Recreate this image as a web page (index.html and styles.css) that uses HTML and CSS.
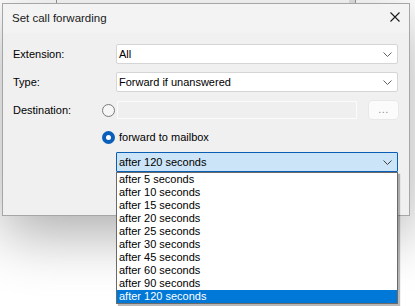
FILE: index.html
```html
<!DOCTYPE html>
<html>
<head>
<meta charset="utf-8">
<link rel="stylesheet" href="styles.css">
</head>
<body>
<div class="desktop">
  <div class="bgwin"><div class="bgwin-strip"></div></div>
  <div class="dialog">
    <div class="titlebar">
      <span class="title">Set call forwarding</span>
      <svg class="close" width="10" height="10" viewBox="0 0 10 10"><path d="M0.5 0.5 L9.5 9.5 M9.5 0.5 L0.5 9.5" stroke="#1b1b1b" stroke-width="1.1" fill="none"/></svg>
    </div>
    <div class="body">
      <div class="row row-ext">
        <span class="lbl lbl-wide">Extension:</span>
        <div class="select"><span class="val">All</span><svg class="chev" width="9" height="5" viewBox="0 0 9 5"><path d="M0.5 0.5 L4.5 4.5 L8.5 0.5" stroke="#606060" stroke-width="1" fill="none"/></svg></div>
      </div>
      <div class="row row-type">
        <span class="lbl lbl-wide">Type:</span>
        <div class="select"><span class="val">Forward if unanswered</span><svg class="chev" width="9" height="5" viewBox="0 0 9 5"><path d="M0.5 0.5 L4.5 4.5 L8.5 0.5" stroke="#606060" stroke-width="1" fill="none"/></svg></div>
      </div>
      <div class="row row-dest">
        <span class="lbl lbl-narrow">Destination:</span>
        <span class="radio"></span>
        <div class="input"></div>
        <div class="more">...</div>
      </div>
      <div class="row row-mail">
        <span class="radio checked"></span>
        <span class="rtext">forward to mailbox</span>
      </div>
      <div class="row row-time">
        <div class="select focus"><span class="val">after 120 seconds</span><svg class="chev" width="9" height="5" viewBox="0 0 9 5"><path d="M0.5 0.5 L4.5 4.5 L8.5 0.5" stroke="#404040" stroke-width="1" fill="none"/></svg>
          <ul class="list">
            <li>after 5 seconds</li>
            <li>after 10 seconds</li>
            <li>after 15 seconds</li>
            <li>after 20 seconds</li>
            <li>after 25 seconds</li>
            <li>after 30 seconds</li>
            <li>after 45 seconds</li>
            <li>after 60 seconds</li>
            <li>after 90 seconds</li>
            <li class="sel">after 120 seconds</li>
          </ul>
        </div>
      </div>
    </div>
  </div>
</div>
</body>
</html>
```

FILE: styles.css
```css
* { box-sizing: border-box; }
html, body {
  margin: 0;
  padding: 0;
  background: #ffffff;
  font-family: "Liberation Sans", Arial, sans-serif;
  font-size: 11px;
  color: #000;
}
.desktop {
  position: relative;
  width: 415px;
  height: 306px;
  overflow: hidden;
}
.bgwin {
  position: absolute;
  left: 56px;
  top: -20px;
  width: 300px;
  height: 40px;
  border: 1px solid #9a9a9a;
  background: #ffffff;
}
.bgwin-strip {
  position: absolute;
  right: 0;
  top: 0;
  width: 6px;
  height: 100%;
  background: #e6e6e6;
}
.dialog {
  position: absolute;
  left: 2px;
  top: 3px;
  width: 408px;
  height: 213px;
  border: 1px solid #a6a6a6;
  background: #f0f0f0;
  box-shadow: 0 18px 55px rgba(0, 0, 0, 0.33);
}
.titlebar {
  height: 29px;
  background: #f3f3f3;
  display: flex;
  align-items: center;
  padding-left: 9px;
  padding-right: 9px;
  justify-content: space-between;
}
.title {
  font-size: 11.5px;
  color: #1a1a1a;
  margin-top: -1px;
}
.close { display: block; margin-top: -4px; }
.body {
  padding: 11px 11px 0 10px;
}
.row {
  display: flex;
  align-items: center;
}
.lbl { flex: none; color: #000; }
.lbl-wide { width: 103px; }
.lbl-narrow { width: 89px; }
.row-type { margin-top: 8px; }
.row-dest { margin-top: 8px; height: 20px; }
.row-mail { margin-top: 8px; height: 18px; padding-left: 89px; }
.row-time { margin-top: 6px; padding-left: 103px; }
.select {
  position: relative;
  flex: 1;
  height: 20px;
  border: 1px solid #d5d5d5;
  border-radius: 2px;
  background: #ffffff;
  display: flex;
  align-items: center;
  justify-content: space-between;
  padding: 0 5px 0 2px;
}
.select .val { color: #000; }
.chev { display: block; margin-top: 0; }
.select.focus {
  background: #cce4f7;
  border-color: #0a5fb4;
  border-radius: 1px;
}
.radio {
  flex: none;
  width: 13px;
  height: 13px;
  border-radius: 50%;
  border: 1px solid #7a7a7a;
  background: #f6f6f6;
}
.radio.checked {
  border: none;
  background: #0a5fb8;
  position: relative;
}
.radio.checked::after {
  content: "";
  position: absolute;
  left: 4px;
  top: 4px;
  width: 5px;
  height: 5px;
  border-radius: 50%;
  background: #fff;
}
.row-dest .radio { margin-right: 2px; }
.input {
  flex: none;
  width: 240px;
  height: 18px;
  border: 1px solid #fbfbfb;
  background: #efefef;
}
.more {
  flex: none;
  margin-left: 11px;
  width: 31px;
  height: 20px;
  border: 1px solid #e8e8e8;
  border-radius: 4px;
  background: #fbfbfb;
  color: #8c8c8c;
  text-align: center;
  line-height: 16px;
  font-size: 11px;
  letter-spacing: 0.5px;
}
.rtext { margin-left: 4px; color: #000; }
.list {
  position: absolute;
  left: -1px;
  top: 19px;
  width: 282px;
  margin: 0;
  padding: 0;
  list-style: none;
  background: #fff;
  border: 1px solid #6a6a6a;
  box-shadow: 2px 2px 1px rgba(0, 0, 0, 0.28);
}
.list li {
  height: 13px;
  line-height: 13px;
  padding-left: 2px;
  color: #000;
}
.list li.sel {
  background: #0078d7;
  color: #fff;
}
```
